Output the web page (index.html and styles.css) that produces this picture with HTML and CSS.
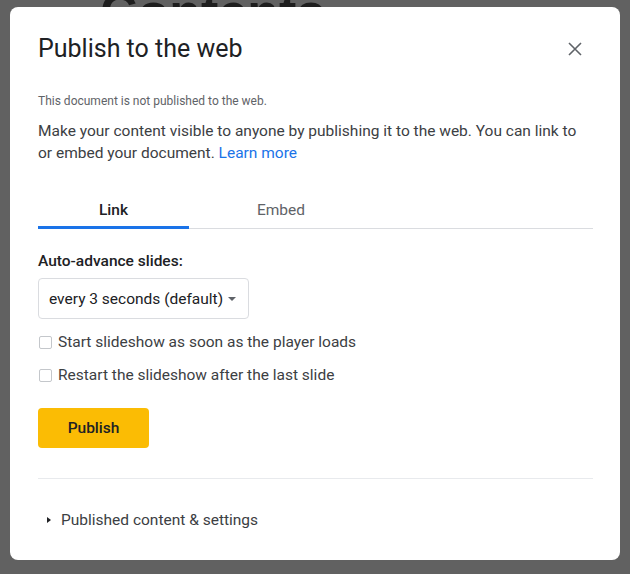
FILE: index.html
```html
<!DOCTYPE html>
<html>
<head>
  <title>Publish to the web</title>
  <link rel="stylesheet" href="styles.css">
</head>
<body>
  <!-- Документ под диалогом -->
  <div class="doc">
    <div class="doc-title">Contents</div>
  </div>

  <!-- Диалог -->
  <div class="overlay">
    <div class="dialog">
      <div class="dialog-header">
        <div class="dialog-title">Publish to the web</div>
        <button class="close-button" aria-label="Close">
          <svg width="14" height="14" viewBox="0 0 14 14">
            <path d="M1 1 L13 13 M13 1 L1 13" stroke="#5f6368" stroke-width="1.6" fill="none"/>
          </svg>
        </button>
      </div>

      <div class="status">This document is not published to the web.</div>
      <p class="intro">Make your content visible to anyone by publishing it to the web. You can link to or embed your document. <a href="#" class="learn-more">Learn more</a></p>

      <div class="tabs">
        <div class="tab tab-active">Link</div>
        <div class="tab tab-embed">Embed</div>
      </div>

      <div class="field-label">Auto-advance slides:</div>
      <div class="select">
        <span>every 3 seconds (default)</span>
        <span class="select-arrow"></span>
      </div>

      <label class="check-row"><span class="checkbox"></span>Start slideshow as soon as the player loads</label>
      <label class="check-row"><span class="checkbox"></span>Restart the slideshow after the last slide</label>

      <button class="publish-button">Publish</button>

      <div class="divider"></div>

      <div class="details">
        <span class="details-arrow"></span>
        <span>Published content &amp; settings</span>
      </div>
    </div>
  </div>
</body>
</html>
```

FILE: styles.css
```css
/* Общие стили */
body {
  margin: 0;
  background-color: #616161;
  font-family: Roboto, "Liberation Sans", Arial, sans-serif;
  overflow: hidden;
}

/* Документ на фоне */
.doc {
  padding-left: 100px;
}

.doc-title {
  font-family: "Liberation Sans", Arial, sans-serif;
  font-weight: bold;
  font-size: 52px;
  line-height: 60px;
  margin-top: -18px;
  color: #1e1e1e;
}

/* Диалог */
.overlay {
  position: fixed;
  top: 7px;
  left: 10px;
  right: 10px;
  bottom: 14px;
}

.dialog {
  background-color: #fff;
  border-radius: 8px;
  height: 100%;
  box-sizing: border-box;
  padding: 26px 27px 0 28px;
  color: #202124;
}

.dialog-header {
  display: flex;
  align-items: center;
  justify-content: space-between;
}

.dialog-title {
  font-size: 25px;
  line-height: 32px;
  color: #202124;
}

.close-button {
  background: none;
  border: none;
  padding: 0;
  margin-right: 11px;
  width: 14px;
  height: 14px;
  display: flex;
  cursor: pointer;
}

.status {
  margin-top: 28px;
  font-size: 12px;
  line-height: 16px;
  color: #5f6368;
}

.intro {
  margin: 11px 0 0;
  font-size: 15.5px;
  line-height: 22px;
  color: #3c4043;
}

.learn-more {
  color: #1a73e8;
  text-decoration: none;
}

/* Вкладки */
.tabs {
  display: flex;
  margin-top: 26px;
  border-bottom: 1px solid #dadce0;
}

.tab {
  padding: 10px 0 6px;
  font-size: 15.5px;
  line-height: 20px;
  text-align: center;
  border-bottom: 3px solid transparent;
  margin-bottom: -1px;
  color: #5f6368;
}

.tab-active {
  width: 151px;
  font-weight: 500;
  color: #202124;
  border-bottom-color: #1a73e8;
}

.tab-embed {
  width: 184px;
}

/* Настройки */
.field-label {
  margin-top: 22px;
  font-size: 15.5px;
  line-height: 20px;
  font-weight: 500;
  color: #202124;
}

.select {
  margin-top: 7px;
  width: 211px;
  height: 41px;
  box-sizing: border-box;
  border: 1px solid #dadce0;
  border-radius: 4px;
  display: flex;
  align-items: center;
  padding: 0 12px 0 10px;
  justify-content: space-between;
  font-size: 15.5px;
  color: #202124;
}

.select-arrow {
  width: 0;
  height: 0;
  border-left: 4px solid transparent;
  border-right: 4px solid transparent;
  border-top: 4px solid #5f6368;
}

.check-row {
  display: flex;
  align-items: center;
  margin-top: 13px;
  font-size: 15.5px;
  line-height: 20px;
  color: #3c4043;
}

.checkbox {
  width: 13px;
  height: 13px;
  box-sizing: border-box;
  border: 1px solid #c4c7cb;
  border-radius: 2px;
  margin: 0 6px 0 1px;
}

.publish-button {
  display: block;
  margin-top: 23px;
  width: 111px;
  height: 40px;
  border: none;
  border-radius: 4px;
  background-color: #fbbc04;
  font-family: Roboto, "Liberation Sans", Arial, sans-serif;
  font-size: 15.5px;
  font-weight: 500;
  color: #202124;
  cursor: pointer;
}

.divider {
  margin-top: 30px;
  height: 1px;
  background-color: #e8eaed;
}

.details {
  display: flex;
  align-items: center;
  margin-top: 31px;
  font-size: 15.5px;
  line-height: 20px;
  color: #3c4043;
}

.details-arrow {
  width: 0;
  height: 0;
  border-top: 3.5px solid transparent;
  border-bottom: 3.5px solid transparent;
  border-left: 4px solid #202124;
  margin: 0 10px 0 9px;
}
```
